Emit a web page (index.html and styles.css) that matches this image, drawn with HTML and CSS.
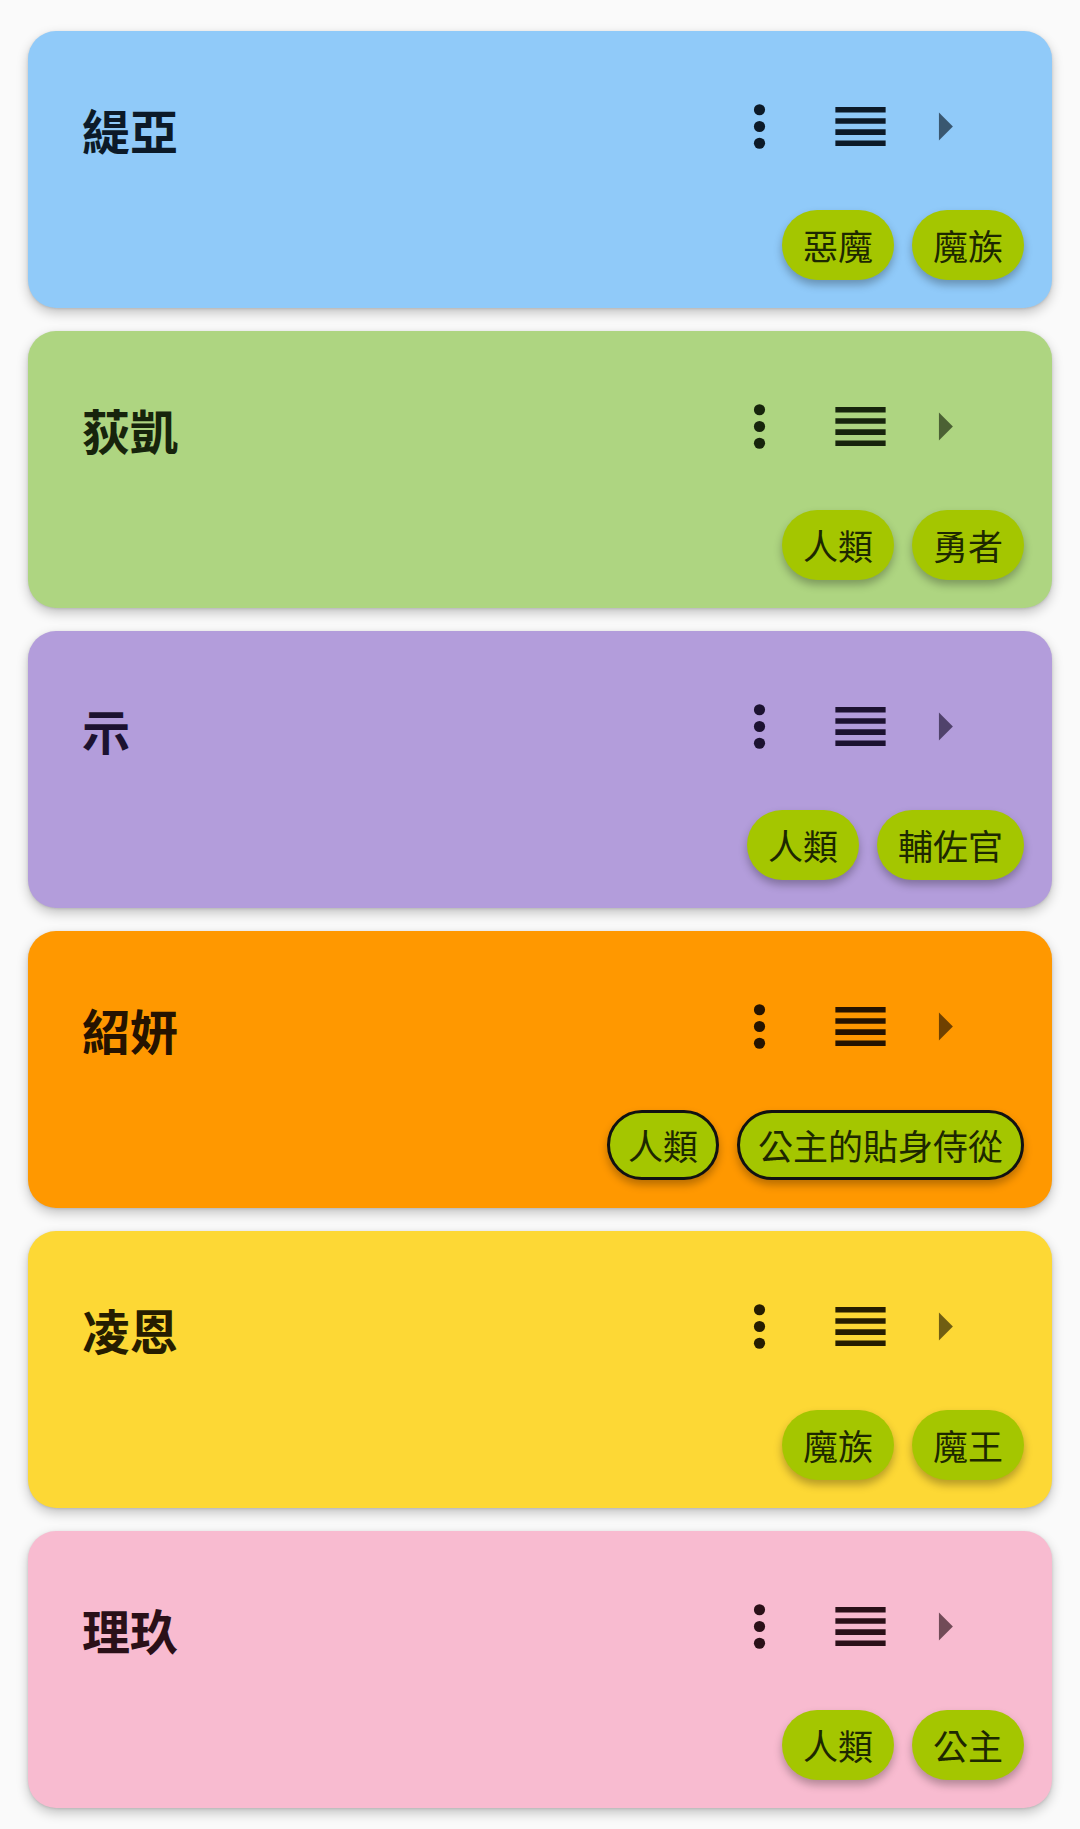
FILE: index.html
```html
<!DOCTYPE html>
<html lang="zh-Hant">
<head>
    <meta charset="UTF-8">
    <meta name="viewport" content="width=device-width, initial-scale=1.0">
    <title>角色列表</title>
    <link rel="stylesheet" href="styles.css">
</head>
<body>
    <div class="list">
        <div class="card card-blue">
            <div class="card-head">
                <span class="name">緹亞</span>
                <button class="icon-btn btn-more"><svg viewBox="0 0 24 24"><circle cx="12" cy="6" r="2"/><circle cx="12" cy="12" r="2"/><circle cx="12" cy="18" r="2"/></svg></button>
                <button class="icon-btn btn-order"><svg viewBox="0 0 24 24"><path d="M3 15h18v-2H3v2zm0 4h18v-2H3v2zm0-8h18V9H3v2zm0-6v2h18V5H3z"/></svg></button>
                <button class="icon-btn btn-open"><svg viewBox="0 0 24 24"><path d="M10 17l5-5-5-5v10z"/></svg></button>
            </div>
            <div class="tags">
                <span class="tag">惡魔</span>
                <span class="tag">魔族</span>
            </div>
        </div>

        <div class="card card-green">
            <div class="card-head">
                <span class="name">荻凱</span>
                <button class="icon-btn btn-more"><svg viewBox="0 0 24 24"><circle cx="12" cy="6" r="2"/><circle cx="12" cy="12" r="2"/><circle cx="12" cy="18" r="2"/></svg></button>
                <button class="icon-btn btn-order"><svg viewBox="0 0 24 24"><path d="M3 15h18v-2H3v2zm0 4h18v-2H3v2zm0-8h18V9H3v2zm0-6v2h18V5H3z"/></svg></button>
                <button class="icon-btn btn-open"><svg viewBox="0 0 24 24"><path d="M10 17l5-5-5-5v10z"/></svg></button>
            </div>
            <div class="tags">
                <span class="tag">人類</span>
                <span class="tag">勇者</span>
            </div>
        </div>

        <div class="card card-purple">
            <div class="card-head">
                <span class="name">示</span>
                <button class="icon-btn btn-more"><svg viewBox="0 0 24 24"><circle cx="12" cy="6" r="2"/><circle cx="12" cy="12" r="2"/><circle cx="12" cy="18" r="2"/></svg></button>
                <button class="icon-btn btn-order"><svg viewBox="0 0 24 24"><path d="M3 15h18v-2H3v2zm0 4h18v-2H3v2zm0-8h18V9H3v2zm0-6v2h18V5H3z"/></svg></button>
                <button class="icon-btn btn-open"><svg viewBox="0 0 24 24"><path d="M10 17l5-5-5-5v10z"/></svg></button>
            </div>
            <div class="tags">
                <span class="tag">人類</span>
                <span class="tag">輔佐官</span>
            </div>
        </div>

        <div class="card card-orange">
            <div class="card-head">
                <span class="name">紹妍</span>
                <button class="icon-btn btn-more"><svg viewBox="0 0 24 24"><circle cx="12" cy="6" r="2"/><circle cx="12" cy="12" r="2"/><circle cx="12" cy="18" r="2"/></svg></button>
                <button class="icon-btn btn-order"><svg viewBox="0 0 24 24"><path d="M3 15h18v-2H3v2zm0 4h18v-2H3v2zm0-8h18V9H3v2zm0-6v2h18V5H3z"/></svg></button>
                <button class="icon-btn btn-open"><svg viewBox="0 0 24 24"><path d="M10 17l5-5-5-5v10z"/></svg></button>
            </div>
            <div class="tags">
                <span class="tag tag-outlined">人類</span>
                <span class="tag tag-outlined">公主的貼身侍從</span>
            </div>
        </div>

        <div class="card card-yellow">
            <div class="card-head">
                <span class="name">凌恩</span>
                <button class="icon-btn btn-more"><svg viewBox="0 0 24 24"><circle cx="12" cy="6" r="2"/><circle cx="12" cy="12" r="2"/><circle cx="12" cy="18" r="2"/></svg></button>
                <button class="icon-btn btn-order"><svg viewBox="0 0 24 24"><path d="M3 15h18v-2H3v2zm0 4h18v-2H3v2zm0-8h18V9H3v2zm0-6v2h18V5H3z"/></svg></button>
                <button class="icon-btn btn-open"><svg viewBox="0 0 24 24"><path d="M10 17l5-5-5-5v10z"/></svg></button>
            </div>
            <div class="tags">
                <span class="tag">魔族</span>
                <span class="tag">魔王</span>
            </div>
        </div>

        <div class="card card-pink">
            <div class="card-head">
                <span class="name">理玖</span>
                <button class="icon-btn btn-more"><svg viewBox="0 0 24 24"><circle cx="12" cy="6" r="2"/><circle cx="12" cy="12" r="2"/><circle cx="12" cy="18" r="2"/></svg></button>
                <button class="icon-btn btn-order"><svg viewBox="0 0 24 24"><path d="M3 15h18v-2H3v2zm0 4h18v-2H3v2zm0-8h18V9H3v2zm0-6v2h18V5H3z"/></svg></button>
                <button class="icon-btn btn-open"><svg viewBox="0 0 24 24"><path d="M10 17l5-5-5-5v10z"/></svg></button>
            </div>
            <div class="tags">
                <span class="tag">人類</span>
                <span class="tag">公主</span>
            </div>
        </div>
    </div>
</body>
</html>
```

FILE: styles.css
```css
body {
    font-family: "Noto Sans CJK TC", "Noto Sans", sans-serif;
    background-color: #fafafa;
    margin: 0;
    padding: 0;
}

.list {
    display: flex;
    flex-direction: column;
    gap: 23px;
    padding: 31px 28px 22px;
}

.card {
    height: 277px;
    box-sizing: border-box;
    border-radius: 28px;
    padding: 62px 28px 28px 54px;
    display: flex;
    flex-direction: column;
    justify-content: space-between;
    box-shadow: 0 5px 12px rgba(0, 0, 0, 0.22), 0 1px 3px rgba(0, 0, 0, 0.12);
}

.card-blue   { background-color: #90caf9; color: #0c1a28; }
.card-green  { background-color: #aed581; color: #17240c; }
.card-purple { background-color: #b39ddb; color: #1c1230; }
.card-orange { background-color: #ff9800; color: #251300; }
.card-yellow { background-color: #fdd835; color: #261d00; }
.card-pink   { background-color: #f8bbd0; color: #2a1018; }

.card-head {
    display: flex;
    align-items: center;
    height: 67px;
    margin-right: 46px;
}

.name {
    flex: 1;
    font-size: 48px;
    font-weight: bold;
    line-height: 67px;
    margin-top: 6px;
}

.icon-btn {
    width: 67px;
    height: 67px;
    padding: 0;
    border: none;
    background: none;
    color: inherit;
    cursor: pointer;
}

.icon-btn svg {
    display: block;
    width: 67px;
    height: 67px;
    fill: currentColor;
}

.btn-order {
    margin-left: 34px;
}

.btn-open {
    margin-left: 17px;
    opacity: 0.65;
}

.tags {
    display: flex;
    justify-content: flex-end;
    gap: 18px;
}

.tag {
    height: 70px;
    box-sizing: border-box;
    padding: 0 21px;
    border-radius: 35px;
    background-color: #a4c600;
    color: #1d2800;
    font-size: 35px;
    line-height: 70px;
    box-shadow: 0 5px 8px rgba(0, 0, 0, 0.28);
}

.tag-outlined {
    border: 3px solid #111;
    padding: 0 18px;
    line-height: 64px;
}
```
